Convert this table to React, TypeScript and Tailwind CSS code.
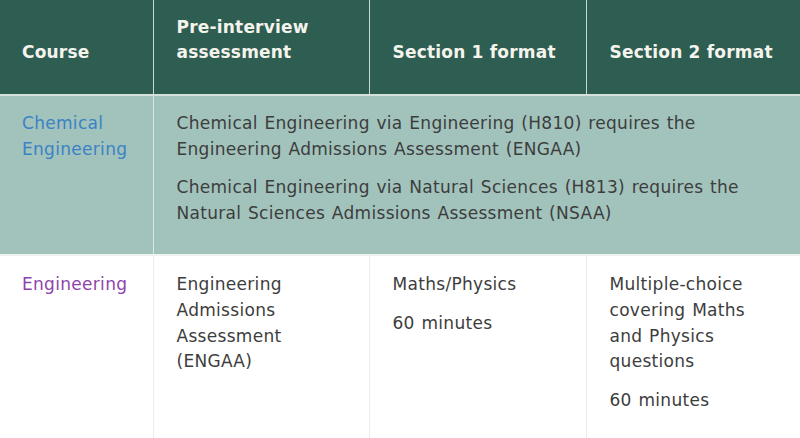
const font = { fontFamily: '"DejaVu Sans", Verdana, sans-serif' }

export default function App() {
  return (
    <div className="w-[800px] h-[438px] overflow-hidden bg-white" style={font}>
      <table className="w-full table-fixed border-collapse text-[17px] leading-[25.6px] tracking-[0.3px] [word-spacing:1px] text-[#3d3d3d]">
        <colgroup>
          <col className="w-[153px]" />
          <col className="w-[216px]" />
          <col className="w-[217px]" />
          <col />
        </colgroup>
        <thead>
          <tr className="h-[95px] bg-[#2e5d52] text-[#f4f4ec] border-b-2 border-[#d5e1dd] tracking-[0.2px] [word-spacing:0px]">
            <th className="px-[22px] pb-[28px] align-bottom text-left font-bold border-r border-[#c9d8d3]">Course</th>
            <th className="px-[23px] pb-[28px] align-bottom text-left font-bold border-r border-[#c9d8d3]">
              Pre-interview assessment
            </th>
            <th className="px-[23px] pb-[28px] align-bottom text-left font-bold border-r border-[#c9d8d3]">
              Section 1 format
            </th>
            <th className="px-[23px] pb-[28px] align-bottom text-left font-bold">Section 2 format</th>
          </tr>
        </thead>
        <tbody>
          <tr className="bg-[#a2c3bc] border-b-2 border-[#eef3f1]">
            <td className="px-[22px] pt-[15px] pb-[28px] align-top border-r border-[#dce6e3]">
              <span className="text-[#3b82c4]">Chemical Engineering</span>
            </td>
            <td colSpan={3} className="px-[23px] pt-[15px] pb-[28px] align-top">
              <p className="mb-[13px]">
                Chemical Engineering via Engineering (H810) requires the Engineering Admissions Assessment (ENGAA)
              </p>
              <p>
                Chemical Engineering via Natural Sciences (H813) requires the Natural Sciences Admissions Assessment
                (NSAA)
              </p>
            </td>
          </tr>
          <tr>
            <td className="px-[22px] pt-[16px] pb-[27px] align-top border-r border-[#ececec]">
              <span className="text-[#8e44ad]">Engineering</span>
            </td>
            <td className="px-[23px] pt-[16px] pb-[27px] align-top border-r border-[#ececec]">
              Engineering Admissions Assessment (ENGAA)
            </td>
            <td className="px-[23px] pt-[16px] pb-[27px] align-top border-r border-[#ececec]">
              <p className="mb-[13px]">Maths/Physics</p>
              <p>60 minutes</p>
            </td>
            <td className="px-[23px] pt-[16px] pb-[27px] align-top">
              <p className="mb-[13px]">Multiple-choice covering Maths and Physics questions</p>
              <p>60 minutes</p>
            </td>
          </tr>
        </tbody>
      </table>
    </div>
  )
}
